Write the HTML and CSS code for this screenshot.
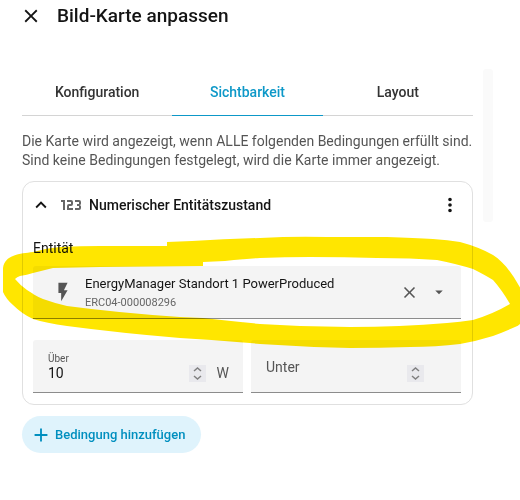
FILE: index.html
```
<!DOCTYPE html>
<html lang="de">
<head>
    <meta charset="UTF-8">
    <meta name="viewport" content="width=device-width, initial-scale=1.0">
    <title>Bild-Karte anpassen</title>
    <link rel="stylesheet" href="styles.css">
</head>
<body>
    <header>
        <button class="icon-button" aria-label="Schließen">
            <svg width="22" height="22" viewBox="0 0 24 24"><path d="M19 6.41 17.59 5 12 10.59 6.41 5 5 6.41 10.59 12 5 17.59 6.41 19 12 13.41 17.59 19 19 17.59 13.41 12z"/></svg>
        </button>
        <h1>Bild-Karte anpassen</h1>
    </header>

    <div class="dialog-body">
        <main>
            <nav class="tabs">
                <a href="#konfiguration">Konfiguration</a>
                <a href="#sichtbarkeit" class="active">Sichtbarkeit</a>
                <a href="#layout">Layout</a>
            </nav>

            <p class="intro">Die Karte wird angezeigt, wenn ALLE folgenden Bedingungen erfüllt sind. Sind keine Bedingungen festgelegt, wird die Karte immer angezeigt.</p>

            <section class="condition">
                <div class="condition-header">
                    <button class="icon-button" aria-label="Einklappen">
                        <svg width="22" height="22" viewBox="0 0 24 24"><path d="M7.41 15.41 12 10.83l4.59 4.58L18 14l-6-6-6 6z"/></svg>
                    </button>
                    <svg class="numeric-icon" width="24" height="24" viewBox="0 0 24 24"><path d="M4 17V9H2V7h4v10H4m18-2a2 2 0 0 1-2 2h-4v-2h4v-2h-2v-2h2V9h-4V7h4a2 2 0 0 1 2 2v1.500a1.500 1.500 0 0 1-1.500 1.500 1.500 1.500 0 0 1 1.500 1.500V15m-8 0v2H8v-4a2 2 0 0 1 2-2h2V9H8V7h4a2 2 0 0 1 2 2v2a2 2 0 0 1-2 2h-2v2h4z"/></svg>
                    <h2>Numerischer Entitätszustand</h2>
                    <button class="icon-button" aria-label="Menü">
                        <svg width="22" height="22" viewBox="0 0 24 24"><path d="M12 16a2 2 0 1 1 0 4 2 2 0 0 1 0-4m0-6a2 2 0 1 1 0 4 2 2 0 0 1 0-4m0-6a2 2 0 1 1 0 4 2 2 0 0 1 0-4z"/></svg>
                    </button>
                </div>

                <div class="entity-label" id="entityLabel">Entität</div>
                <div class="field entity-field">
                    <button class="entity-select" aria-labelledby="entityLabel entityName">
                        <svg width="22" height="22" viewBox="0 0 24 24"><path d="M7 2v11h3v9l7-12h-4l4-8z"/></svg>
                        <span class="entity-text">
                            <span id="entityName">EnergyManager Standort 1 PowerProduced</span>
                            <small>ERC04-000008296</small>
                        </span>
                    </button>
                    <button class="icon-button" aria-label="Löschen">
                        <svg width="19" height="19" viewBox="0 0 24 24"><path d="M19 6.41 17.59 5 12 10.59 6.41 5 5 6.41 10.59 12 5 17.59 6.41 19 12 13.41 17.59 19 19 17.59 13.41 12z"/></svg>
                    </button>
                    <button class="icon-button" aria-label="Auswahl öffnen">
                        <svg width="18" height="18" viewBox="0 0 24 24"><path d="m7 10 5 5 5-5z"/></svg>
                    </button>
                    <!-- Markierung um das Entitätsfeld -->
                    <svg class="marker" width="520" height="120" viewBox="0 232 520 120" aria-hidden="true">
                        <path fill-rule="evenodd" d="M3 268 C4 261 8 258 13 256 C20 253 26 253 33 252 Q47 248 60 247 Q80 246 100 246 L167 246 V242 L192 241 Q225 239 260 238 Q295 236 327 237 Q360 237 387 237 Q415 238 433 239 Q448 240 460 242 Q479 247 493 255 C504 262 512 273 522 291 V320 Q521 325 515 327 Q504 332 493 336 Q477 341 460 344 Q436 347 410 347 Q380 348 350 348 Q305 347 260 344 Q220 340 180 338 Q120 333 67 326 Q46 323 33 319 Q22 314 13 305 Q6 299 3 292 Z
                        M15 279 Q17 277 20 276 Q27 275 33 273 L53 268 L100 267 L203 266 V262 L225 261 Q242 259 260 258 Q285 257 310 257 Q345 257 377 258 Q412 258 437 260 Q457 264 473 269 Q485 275 493 280 Q502 290 510 304 Q493 314 473 320 Q460 322 447 323 Q400 327 350 327 Q305 327 260 324 Q230 321 203 318 L180 317 Q120 313 67 306 Q54 303 43 299 Q34 295 27 290 Q20 285 15 279 Z"/>
                    </svg>
                </div>

                <div class="limits">
                    <div class="field number-field">
                        <div class="number-text">
                            <label for="above">Über</label>
                            <input type="number" id="above" value="10">
                        </div>
                        <button class="spinner" aria-label="Über ändern">
                            <svg width="17" height="17" viewBox="0 0 17 17"><path d="m5 6 3.500-3L12 6M5 11l3.500 3L12 11"/></svg>
                        </button>
                        <span class="unit">W</span>
                    </div>
                    <div class="field number-field">
                        <input type="number" id="below" placeholder="Unter" aria-label="Unter">
                        <button class="spinner" aria-label="Unter ändern">
                            <svg width="17" height="17" viewBox="0 0 17 17"><path d="m5 6 3.500-3L12 6M5 11l3.500 3L12 11"/></svg>
                        </button>
                        <span class="unit"></span>
                    </div>
                </div>
            </section>

            <button class="add-button">
                <svg width="22" height="22" viewBox="0 0 24 24"><path d="M19 13h-6v6h-2v-6H5v-2h6V5h2v6h6z"/></svg>
                Bedingung hinzufügen
            </button>
        </main>
        <div class="scrollbar"></div>
    </div>
</body>
</html>
```
FILE: styles.css
```
* {
    box-sizing: border-box;
}

body {
    font-family: Roboto, "Liberation Sans", sans-serif;
    font-size: 14px;
    margin: 0;
    background-color: #fff;
    color: #141414;
    overflow-x: hidden;
}

button,
input {
    font: inherit;
    color: inherit;
    border: none;
    background: none;
    padding: 0;
    margin: 0;
}

button {
    cursor: pointer;
}

svg {
    display: block;
    flex: none;
    fill: currentColor;
}

header {
    display: flex;
    align-items: center;
    gap: 15px;
    height: 32px;
    padding: 0 20px;
}

h1 {
    font-size: 19px;
    line-height: 20px;
    font-weight: 500;
    margin: 0;
}

.dialog-body {
    display: flex;
    align-items: flex-start;
    gap: 10px;
    padding: 37px 27px 0 22px;
}

main {
    flex: 1;
    min-width: 0;
}

.scrollbar {
    width: 10px;
    height: 153px;
    border-radius: 3px;
    background-color: #fafafa;
}

.tabs {
    display: grid;
    grid-template-columns: repeat(3, 1fr);
}

.tabs a {
    height: 47px;
    line-height: 46px;
    text-align: center;
    font-weight: 500;
    color: #333;
    text-decoration: none;
    border-bottom: 1px solid #d4d4d4;
}

.tabs a.active {
    color: #0d98c8;
    border-bottom: 1px solid #0d98c8;
}

.intro {
    margin: 16px 0 11px;
    line-height: 19px;
    color: #555;
}

.condition {
    border: 1px solid #e0e0e0;
    border-radius: 12px;
    padding: 0 11px 11px 10px;
}

.condition-header {
    display: flex;
    align-items: center;
    height: 46px;
    margin-left: -3px;
}

.condition-header h2 {
    flex: 1;
    font-size: 14px;
    font-weight: 500;
    margin: 0;
}

.numeric-icon {
    margin: 0 6px 0 7px;
    color: #666;
}

.entity-label {
    line-height: 20px;
    margin: 10px 0 8px;
}

.field {
    display: flex;
    align-items: center;
    height: 53px;
    background-color: #f4f4f4;
    border-bottom: 1px solid #8c8c8c;
    border-radius: 3px 3px 0 0;
}

.entity-field {
    position: relative;
    gap: 11px;
    padding: 0 13px 0 19px;
    color: #555;
}

.entity-select {
    display: flex;
    flex: 1;
    align-items: center;
    gap: 11px;
    text-align: left;
}

.entity-text {
    display: flex;
    flex-direction: column;
    padding-top: 2px;
    font-size: 13px;
    line-height: 19px;
    color: #141414;
}

.entity-text small {
    font-size: 11px;
    color: #666;
}

.marker {
    position: absolute;
    top: -34px;
    left: -33px;
    color: #ffe600;
    mix-blend-mode: multiply;
    pointer-events: none;
}

.limits {
    display: grid;
    grid-template-columns: 1fr 1fr;
    gap: 8px;
    margin-top: 21px;
}

.number-field {
    padding: 2px 14px 0 15px;
}

.number-text {
    flex: 1;
    min-width: 0;
}

.number-text label {
    display: block;
    font-size: 10px;
    line-height: 12px;
    color: #555;
}

.number-field input {
    flex: 1;
    width: 100%;
    min-width: 0;
    height: 16px;
    appearance: textfield;
}

.number-field input::placeholder {
    color: #555;
    opacity: 1;
}

.spinner {
    margin-top: 12px;
    background-color: #e9e9ed;
}

.spinner svg {
    fill: none;
    stroke: #808080;
    stroke-width: 1.5;
}

.unit {
    width: 23px;
    margin-top: 12px;
    text-align: right;
    color: #555;
}

.add-button {
    display: flex;
    align-items: center;
    gap: 3px;
    height: 37px;
    margin-top: 11px;
    padding: 0 16px 0 8px;
    border-radius: 19px;
    background-color: #dff3fc;
    color: #008fbf;
    font-size: 13px;
    font-weight: 500;
}
```
